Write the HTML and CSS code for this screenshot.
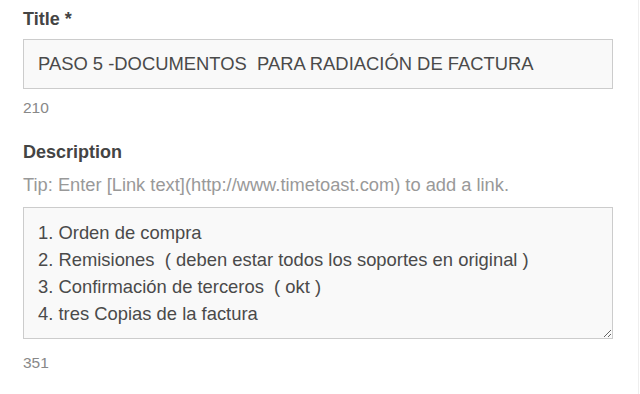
FILE: index.html
```html
<!DOCTYPE html>
<html>
<head>
<meta charset="utf-8">
<link rel="stylesheet" href="styles.css">
</head>
<body>
<div class="page">
  <form class="form">
    <label class="label" for="title">Title *</label>
    <input id="title" class="field" type="text" value="PASO 5 -DOCUMENTOS  PARA RADIACIÓN DE FACTURA">
    <div class="count">210</div>

    <label class="label label-desc" for="desc">Description</label>
    <div class="tip">Tip: Enter [Link text](http://www.timetoast.com) to add a link.</div>
    <textarea id="desc" class="area">1. Orden de compra
2. Remisiones  ( deben estar todos los soportes en original )
3. Confirmación de terceros  ( okt )
4. tres Copias de la factura</textarea>
    <div class="count count-desc">351</div>
  </form>
</div>
</body>
</html>
```

FILE: styles.css
```css
html, body {
  margin: 0;
  padding: 0;
  background: #fff;
}
.page {
  width: 639px;
  height: 394px;
  border-right: 1px solid #eeeeee;
  box-sizing: border-box;
  font-family: "Liberation Sans", Arial, sans-serif;
  overflow: hidden;
}
.form {
  display: flex;
  flex-direction: column;
  padding-left: 23px;
  width: 590px;
}
.label {
  display: block;
  font-size: 18px;
  font-weight: bold;
  color: #444;
  line-height: 20px;
  margin-top: 9px;
}
.label-desc {
  margin-top: 24px;
}
.field {
  margin: 10px 0 0;
  width: 590px;
  height: 50px;
  box-sizing: border-box;
  border: 1px solid #cccccc;
  background: #f9f9f9;
  padding: 0 14px;
  font-family: "Liberation Sans", Arial, sans-serif;
  font-size: 18.4px;
  color: #4a4a4a;
  outline: none;
}
.count {
  font-size: 15.5px;
  color: #888;
  line-height: 20px;
  margin-top: 9px;
}
.count-desc {
  margin-top: 14px;
}
.tip {
  font-size: 18.3px;
  color: #999;
  line-height: 20px;
  margin-top: 13px;
}
.area {
  display: block;
  margin: 12px 0 0;
  width: 590px;
  height: 132px;
  box-sizing: border-box;
  border: 1px solid #cccccc;
  background: #f9f9f9;
  padding: 11px 14px;
  font-family: "Liberation Sans", Arial, sans-serif;
  font-size: 18.4px;
  line-height: 27px;
  color: #4a4a4a;
  outline: none;
  overflow: hidden;
}
```
